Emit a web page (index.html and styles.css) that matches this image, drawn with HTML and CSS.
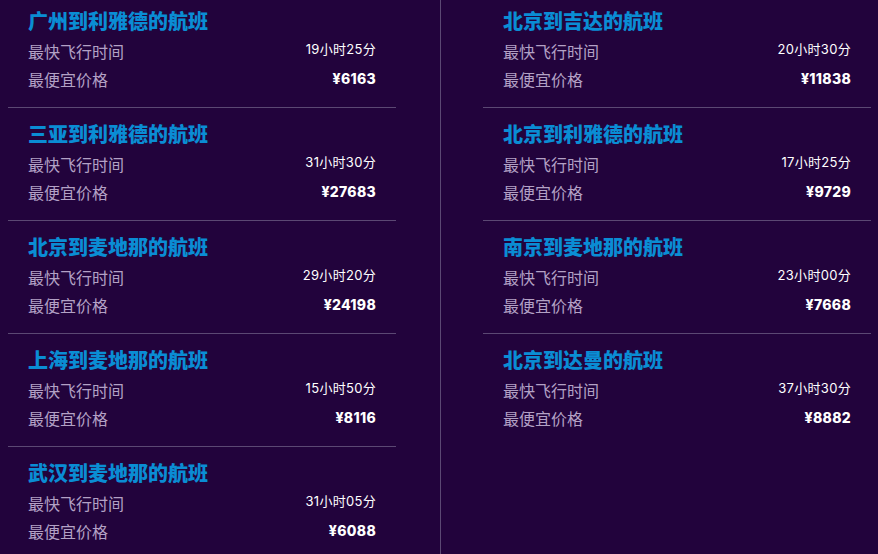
FILE: index.html
```html
<!DOCTYPE html>
<html lang="zh">
<head>
<meta charset="utf-8">
<title>航班</title>
<link rel="stylesheet" href="styles.css">
</head>
<body>
<div class="page">
  <div class="col col-left">
    <ul class="list">
      <li class="item"><h3 class="title">广州到利雅德的航班</h3><div class="row"><span class="label">最快飞行时间</span><span class="value">19小时25分</span></div><div class="row"><span class="label">最便宜价格</span><span class="price">¥6163</span></div></li>
      <li class="item"><h3 class="title">三亚到利雅德的航班</h3><div class="row"><span class="label">最快飞行时间</span><span class="value">31小时30分</span></div><div class="row"><span class="label">最便宜价格</span><span class="price">¥27683</span></div></li>
      <li class="item"><h3 class="title">北京到麦地那的航班</h3><div class="row"><span class="label">最快飞行时间</span><span class="value">29小时20分</span></div><div class="row"><span class="label">最便宜价格</span><span class="price">¥24198</span></div></li>
      <li class="item"><h3 class="title">上海到麦地那的航班</h3><div class="row"><span class="label">最快飞行时间</span><span class="value">15小时50分</span></div><div class="row"><span class="label">最便宜价格</span><span class="price">¥8116</span></div></li>
      <li class="item"><h3 class="title">武汉到麦地那的航班</h3><div class="row"><span class="label">最快飞行时间</span><span class="value">31小时05分</span></div><div class="row"><span class="label">最便宜价格</span><span class="price">¥6088</span></div></li>
    </ul>
  </div>
  <div class="col col-right">
    <ul class="list">
      <li class="item"><h3 class="title">北京到吉达的航班</h3><div class="row"><span class="label">最快飞行时间</span><span class="value">20小时30分</span></div><div class="row"><span class="label">最便宜价格</span><span class="price">¥11838</span></div></li>
      <li class="item"><h3 class="title">北京到利雅德的航班</h3><div class="row"><span class="label">最快飞行时间</span><span class="value">17小时25分</span></div><div class="row"><span class="label">最便宜价格</span><span class="price">¥9729</span></div></li>
      <li class="item"><h3 class="title">南京到麦地那的航班</h3><div class="row"><span class="label">最快飞行时间</span><span class="value">23小时00分</span></div><div class="row"><span class="label">最便宜价格</span><span class="price">¥7668</span></div></li>
      <li class="item"><h3 class="title">北京到达曼的航班</h3><div class="row"><span class="label">最快飞行时间</span><span class="value">37小时30分</span></div><div class="row"><span class="label">最便宜价格</span><span class="price">¥8882</span></div></li>
    </ul>
  </div>
</div>
</body>
</html>
```

FILE: styles.css
```css
html, body {
  margin: 0;
  padding: 0;
  height: 100%;
  overflow: hidden;
  background: #22033c;
}
body {
  font-family: "Noto Sans CJK SC", sans-serif;
}
.page {
  display: grid;
  grid-template-columns: 441px 1fr;
  height: 100vh;
}
.col {
  box-sizing: border-box;
  overflow: hidden;
}
.col-left {
  border-right: 1px solid #5b4873;
  padding: 0 44px 0 8px;
}
.col-right {
  padding: 0 7px 0 42px;
}
.list {
  list-style: none;
  margin: -5px 0 0;
  padding: 0;
}
.item {
  padding: 12px 20px 14px;
  border-bottom: 1px solid #5b4873;
}
.item:last-child {
  border-bottom: none;
}
.title {
  margin: 0 0 2px;
  font-size: 20px;
  line-height: 28px;
  font-weight: 900;
  color: #0a8dd4;
}
.row {
  display: flex;
  justify-content: space-between;
  align-items: center;
  height: 28px;
}
.label {
  font-size: 16px;
  line-height: 28px;
  color: #b3a1c5;
}
.value {
  font-family: "Inter", "Noto Sans CJK SC", sans-serif;
  font-size: 13px;
  line-height: 20px;
  letter-spacing: 0.3px;
  color: #ffffff;
  margin-top: -4px;
}
.price {
  font-family: "Inter", "Noto Sans CJK SC", sans-serif;
  font-size: 14px;
  font-weight: 800;
  line-height: 20px;
  letter-spacing: 0.3px;
  color: #ffffff;
}
```
